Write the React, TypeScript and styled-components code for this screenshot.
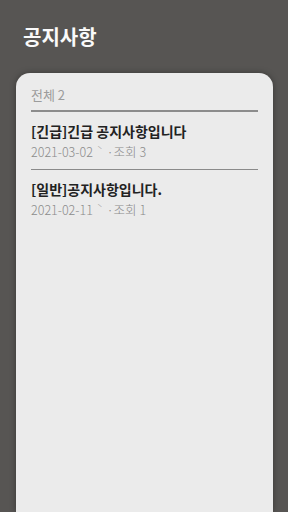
import React from 'react'
import styled, { createGlobalStyle } from 'styled-components'

const GlobalStyle = createGlobalStyle`
  html, body {
    margin: 0;
    padding: 0;
    background: #575553;
    font-family: "Noto Sans CJK KR", "Noto Sans", sans-serif;
  }
`

const Page = styled.div`
  width: 288px;
  height: 512px;
  display: flex;
  flex-direction: column;
  overflow: hidden;
  background: #575553;
`

const Title = styled.h1`
  margin: 0;
  padding: 22px 23px 0;
  height: 51px;
  font-size: 20px;
  font-weight: 700;
  color: #fafafa;
  line-height: 30px;
`

const Card = styled.div`
  flex: 1;
  margin: 0 15px 0 16px;
  background: #ebebeb;
  border-radius: 14px 14px 0 0;
  box-shadow: 0 0 6px rgba(0, 0, 0, 0.35);
  padding: 12px 15px 0;
`

const Count = styled.div`
  font-size: 13px;
  color: #9c9c9c;
  line-height: 20px;
  padding-bottom: 5px;
  border-bottom: 2px solid #8c8c8c;
`

const Item = styled.div<{ last?: boolean }>`
  padding: 9px 0 9px;
  border-bottom: ${(p) => (p.last ? 'none' : '1px solid #8a8a8a')};
`

const ItemTitle = styled.div`
  font-size: 14px;
  font-weight: 700;
  color: #222;
  line-height: 20px;
`

const Meta = styled.div`
  font-size: 12.5px;
  font-weight: 300;
  color: #8a8a8a;
  line-height: 17px;
`

const Tick = styled.span`
  display: inline-block;
  margin: 0 4px 0 4px;
  font-size: 10px;
  vertical-align: 3px;
`

const notices = [
  { title: '[긴급]긴급 공지사항입니다', date: '2021-03-02', views: 3 },
  { title: '[일반]공지사항입니다.', date: '2021-02-11', views: 1 },
]

export default function App() {
  return (
    <Page>
      <GlobalStyle />
      <Title>공지사항</Title>
      <Card>
        <Count>전체 2</Count>
        {notices.map((n, i) => (
          <Item key={i} last={i === notices.length - 1}>
            <ItemTitle>{n.title}</ItemTitle>
            <Meta>
              {n.date}
              <Tick>ˋ</Tick>·조회 {n.views}
            </Meta>
          </Item>
        ))}
      </Card>
    </Page>
  )
}
